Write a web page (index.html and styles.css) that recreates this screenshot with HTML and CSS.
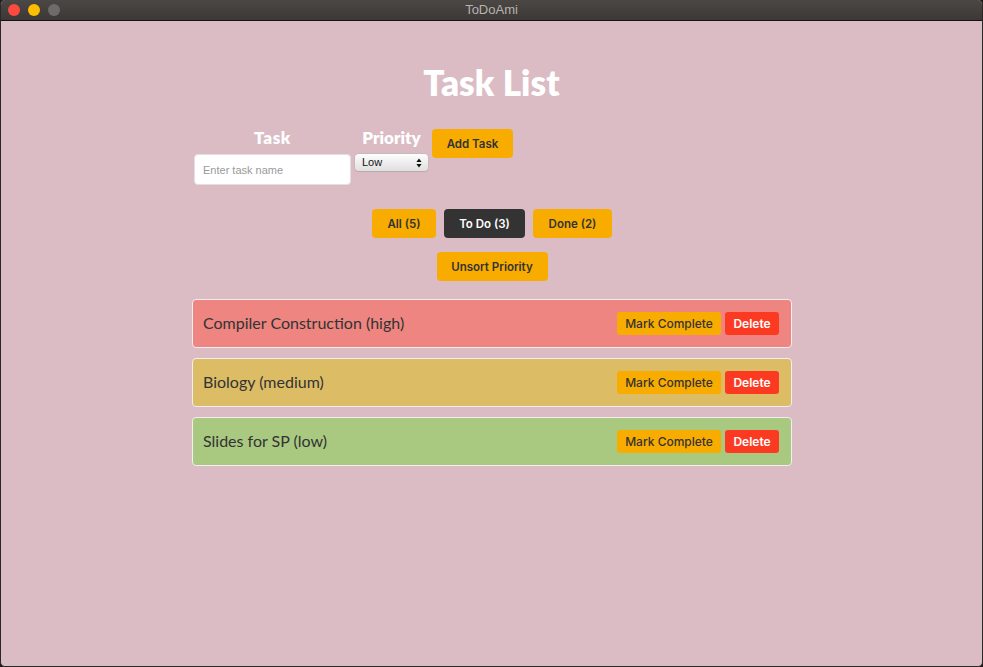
FILE: index.html
```html
<!DOCTYPE html>
<html>
<head>
<meta charset="utf-8">
<title>ToDoAmi</title>
<link rel="stylesheet" href="styles.css">
</head>
<body>
<div class="window">
  <div class="titlebar">
    <div class="lights">
      <span class="light red"></span>
      <span class="light yellow"></span>
      <span class="light gray"></span>
    </div>
    <div class="wtitle">ToDoAmi</div>
  </div>
  <main class="content">
    <h1 class="heading">Task List</h1>
    <div class="container">
      <form class="task-form">
        <div class="field field-task">
          <label class="flabel">Task</label>
          <input class="text-input" type="text" placeholder="Enter task name">
        </div>
        <div class="field field-priority">
          <label class="flabel">Priority</label>
          <div class="select-wrap">
            <select class="select">
              <option>Low</option>
              <option>Medium</option>
              <option>High</option>
            </select>
            <svg class="select-arrows" width="6" height="10" viewBox="0 0 6 10"><path d="M3 0.5 L5.6 4 L0.4 4 Z M3 9.5 L5.6 6 L0.4 6 Z" fill="#111"/></svg>
          </div>
        </div>
        <button type="button" class="btn btn-add">Add Task</button>
      </form>
      <div class="filters">
        <button class="btn btn-filter">All (5)</button>
        <button class="btn btn-filter active">To Do (3)</button>
        <button class="btn btn-filter">Done (2)</button>
      </div>
      <div class="sort-row">
        <button class="btn btn-sort">Unsort Priority</button>
      </div>
      <ul class="task-list">
        <li class="task high">
          <span class="task-name">Compiler Construction (high)</span>
          <div class="actions">
            <button class="btn-sm complete">Mark Complete</button>
            <button class="btn-sm delete">Delete</button>
          </div>
        </li>
        <li class="task medium">
          <span class="task-name">Biology (medium)</span>
          <div class="actions">
            <button class="btn-sm complete">Mark Complete</button>
            <button class="btn-sm delete">Delete</button>
          </div>
        </li>
        <li class="task low">
          <span class="task-name">Slides for SP (low)</span>
          <div class="actions">
            <button class="btn-sm complete">Mark Complete</button>
            <button class="btn-sm delete">Delete</button>
          </div>
        </li>
      </ul>
    </div>
  </main>
</div>
</body>
</html>
```

FILE: styles.css
```css
* { box-sizing: border-box; }

html, body {
  margin: 0;
  padding: 0;
  width: 983px;
  height: 667px;
  overflow: hidden;
  background: #1e1d1c;
}

.window {
  width: 983px;
  height: 667px;
  background: #dbbbc4;
  border-radius: 5px;
  border-left: 1px solid #2a2827;
  border-right: 1px solid #2a2827;
  border-bottom: 1px solid #2a2827;
  overflow: hidden;
  display: flex;
  flex-direction: column;
}

.titlebar {
  height: 21px;
  flex: 0 0 21px;
  background: linear-gradient(#4a4745, #3b3836);
  border-bottom: 1px solid #141312;
  display: flex;
  align-items: center;
  position: relative;
}

.lights {
  display: flex;
  gap: 8px;
  padding-left: 7px;
  align-items: center;
  height: 100%;
}

.light {
  width: 12px;
  height: 12px;
  border-radius: 50%;
  display: block;
}
.red { background: #fd4a41; }
.yellow { background: #fdbd00; }
.gray { background: #6e6c6a; }

.wtitle {
  position: absolute;
  left: 0;
  right: 0;
  top: 1px;
  text-align: center;
  font-family: "Liberation Sans", Arial, sans-serif;
  font-size: 13px;
  color: #b7b3af;
  line-height: 18px;
  pointer-events: none;
}

.content {
  font-family: Lato, "Noto Sans", sans-serif;
  color: #333;
  display: flex;
  flex-direction: column;
  align-items: center;
}

.heading {
  margin: 39px 0 0;
  font-size: 35px;
  line-height: 44px;
  font-weight: 800;
  color: #fff;
  letter-spacing: 0.1px;
}

.container {
  width: 600px;
  margin-left: 1px;
  display: flex;
  flex-direction: column;
  align-items: center;
}

.task-form {
  align-self: flex-start;
  margin: 25px 0 0 2px;
  display: flex;
  align-items: flex-start;
  gap: 4px;
}

.field {
  display: flex;
  flex-direction: column;
  align-items: center;
}

.flabel {
  color: #fff;
  font-weight: 800;
  font-size: 17px;
  line-height: 18px;
  margin-bottom: 7px;
}

.field-task .flabel { letter-spacing: 0.6px; }

.text-input {
  width: 157px;
  height: 31px;
  border: 1px solid #e4e0e1;
  border-radius: 4px;
  background: #fff;
  padding: 0 8px;
  font-family: "Liberation Sans", Arial, sans-serif;
  font-size: 11px;
  color: #333;
  outline: none;
}
.text-input::placeholder { color: #9a9a9a; }

.select-wrap {
  position: relative;
  width: 73px;
  height: 17px;
}

.select {
  display: block;
  appearance: none;
  -webkit-appearance: none;
  width: 73px;
  height: 17px;
  margin: 0;
  border: none;
  border-radius: 4px;
  background: linear-gradient(#ffffff, #ececec 55%, #e0e0e0);
  box-shadow: 0 0 0 0.5px #b9b6b7, 0 1px 1px rgba(0,0,0,0.15);
  padding: 0 0 0 7px;
  font-family: "Liberation Sans", Arial, sans-serif;
  font-size: 11px;
  line-height: 17px;
  color: #111;
  outline: none;
}

.select-arrows {
  position: absolute;
  right: 6px;
  top: 4px;
  pointer-events: none;
}

.btn {
  border: none;
  border-radius: 4px;
  background: #f9ac00;
  color: #333;
  font-family: Inter, "Liberation Sans", sans-serif;
  font-weight: 600;
  font-size: 11.5px;
  height: 29px;
  padding: 0 14px;
  cursor: pointer;
}

.btn-add {
  width: 81px;
  padding: 0;
}

.filters {
  display: flex;
  gap: 9px;
  margin-top: 24px;
}

.btn-filter:nth-child(1) { width: 64px; padding: 0; }
.btn-filter:nth-child(2) { width: 81px; padding: 0; margin-left: -1px; }
.btn-filter:nth-child(3) { width: 79px; padding: 0; margin-left: -1px; }

.btn-filter.active {
  background: #333;
  color: #fff;
}

.sort-row {
  display: flex;
  margin-top: 14px;
}

.btn-sort {
  width: 111px;
  padding: 0;
}

.task-list {
  list-style: none;
  margin: 18px 0 0;
  padding: 0;
  width: 600px;
  display: flex;
  flex-direction: column;
  gap: 10px;
}

.task {
  height: 49px;
  border: 1px solid #f3eef0;
  border-radius: 4px;
  display: flex;
  align-items: center;
  justify-content: space-between;
  padding: 0 12px 0 10px;
}

.task.high { background: #ee8580; }
.task.medium { background: #dcbd66; }
.task.low { background: #a9c981; }

.task-name {
  font-size: 16px;
  color: #333;
  margin-top: -3px;
}

.actions {
  display: flex;
  gap: 4px;
}

.btn-sm {
  border: none;
  border-radius: 3px;
  height: 23px;
  font-family: Inter, "Liberation Sans", sans-serif;
  font-weight: 500;
  font-size: 12px;
  padding: 0;
  cursor: pointer;
}

.btn-sm.complete {
  width: 104px;
  background: #f9ac00;
  color: #333;
}

.btn-sm.delete {
  width: 54px;
  background: #fc3a22;
  color: #fff;
  font-weight: 600;
}
```
